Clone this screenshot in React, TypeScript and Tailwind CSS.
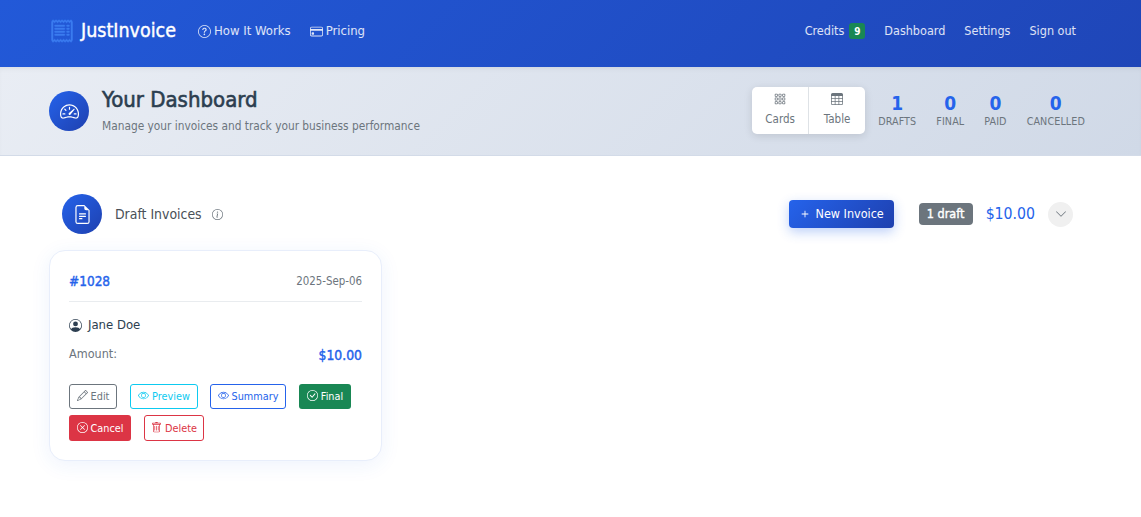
import {
  BsCheckCircle,
  BsChevronDown,
  BsCreditCard,
  BsEye,
  BsFileEarmarkText,
  BsGrid3X3Gap,
  BsInfoCircle,
  BsPencil,
  BsPersonCircle,
  BsPlus,
  BsQuestionCircle,
  BsReceipt,
  BsSpeedometer2,
  BsTable,
  BsTrash,
  BsXCircle,
} from "react-icons/bs";

const stats = [
  { n: 1, label: "DRAFTS" },
  { n: 0, label: "FINAL" },
  { n: 0, label: "PAID" },
  { n: 0, label: "CANCELLED" },
];

const Navbar = () => (
  <nav className="flex h-[67px] items-center justify-between bg-[linear-gradient(135deg,#2259d8,#1f46b8)] pb-[5px] pl-[50px] pr-[65px] text-[13px] text-white/85">
    <div className="flex items-center">
      <BsReceipt className="h-6 w-6 text-[#3b7cf0]" stroke="currentColor" strokeWidth={0.3} />
      <span className="ml-[7px] text-[19.5px] text-white [-webkit-text-stroke:0.4px_white]">JustInvoice</span>
      <span className="ml-[22px] flex items-center gap-[3px]">
        <BsQuestionCircle className="h-[13px] w-[13px]" /> How It Works
      </span>
      <span className="ml-[19px] flex items-center gap-[3px]">
        <BsCreditCard className="h-[13px] w-[13px]" /> Pricing
      </span>
    </div>
    <div className="flex items-center gap-[19px] text-[12.5px]">
      <span className="flex items-center gap-[5px]">
        Credits
        <span className="flex h-4 w-4 items-center justify-center rounded-[3px] bg-[#198754] text-[10px] font-bold text-white">
          9
        </span>
      </span>
      <span>Dashboard</span>
      <span>Settings</span>
      <span>Sign out</span>
    </div>
  </nav>
);

const DashboardHeader = () => (
  <header className="flex h-[89px] items-center justify-between border-b border-[#d3dbe8] bg-[linear-gradient(135deg,#e9edf4,#d0d9e7)] pl-[49px] pr-[56px] shadow-[inset_0_4px_6px_-4px_rgba(0,0,0,0.1)]">
    <div className="flex items-center">
      <div className="flex h-10 w-10 items-center justify-center rounded-full bg-[linear-gradient(135deg,#2563eb,#1e40af)] text-white">
        <BsSpeedometer2 className="h-[19px] w-[19px]" />
      </div>
      <div className="ml-[13px] pb-1">
        <h1 className="text-[22px] leading-[29px] text-[#2c3e50] [-webkit-text-stroke:0.6px_#2c3e50]">Your Dashboard</h1>
        <p className="mt-[4px] text-[11.8px] leading-4 text-[#6c757d]">
          Manage your invoices and track your business performance
        </p>
      </div>
    </div>
    <div className="flex items-center">
      <div className="mb-[2px] flex h-[47px] w-[113px] rounded-[5px] bg-white text-[11.5px] text-[#6c757d] shadow-[0_2px_8px_rgba(0,0,0,0.12)]">
        <div className="flex w-[57px] flex-col items-center justify-center gap-[6px] border-r border-[#dee2e6] pt-[2px]">
          <BsGrid3X3Gap className="h-3 w-3" />
          Cards
        </div>
        <div className="flex flex-1 flex-col items-center justify-center gap-[6px] pt-[2px]">
          <BsTable className="h-3 w-3" />
          Table
        </div>
      </div>
      <div className="ml-[13px] flex gap-[20px] pb-[3px]">
        {stats.map((s) => (
          <div key={s.label} className="flex flex-col items-center">
            <span className="text-[19px] leading-[24px] font-bold text-[#2563eb]">{s.n}</span>
            <span className="text-[10.7px] leading-[14px] tracking-[0.1px] text-[#6c757d]">{s.label}</span>
          </div>
        ))}
      </div>
    </div>
  </header>
);

const btn = "flex items-center justify-center gap-[3px] rounded-[3px] pt-[2px]";
const btnIcon = "h-[11px] w-[11px] -translate-y-[2px]";

const InvoiceCard = () => (
  <div className="w-[333px] rounded-2xl border border-[#e8eefb] bg-white px-[19px] pt-[20px] pb-[19px] shadow-[0_4px_20px_rgba(37,99,235,0.08)]">
    <div className="flex items-center justify-between border-b border-[#e9ecef] pb-[9px]">
      <span className="text-[13.5px] leading-[21px] text-[#2563eb] [-webkit-text-stroke:0.4px_#2563eb]">#1028</span>
      <span className="text-[11.4px] text-[#6c757d]">2025-Sep-06</span>
    </div>
    <div className="mt-[14px] flex items-center gap-[6px] text-[13px] leading-[18px] text-[#2c3e50]">
      <BsPersonCircle className="h-[13px] w-[13px]" /> Jane Doe
    </div>
    <div className="mt-[11px] flex justify-between">
      <span className="text-[12.5px] leading-[18px] text-[#6c757d]">Amount:</span>
      <span className="mb-[1px] text-[13.8px] leading-[21px] text-[#2563eb] [-webkit-text-stroke:0.4px_#2563eb]">$10.00</span>
    </div>
    <div className="mt-[17px] flex flex-wrap gap-x-[13px] gap-y-[6px] text-[10.8px]">
      <span className={`${btn} h-[25px] w-[48px] border border-[#6c757d] text-[#6c757d]`}>
        <BsPencil className={btnIcon} /> Edit
      </span>
      <span className={`${btn} h-[25px] w-[68px] border border-[#0dcaf0] text-[#0dcaf0]`}>
        <BsEye className={btnIcon} /> Preview
      </span>
      <span className={`${btn} -ml-px h-[25px] w-[76px] border border-[#2563eb] text-[#2563eb]`}>
        <BsEye className={btnIcon} /> Summary
      </span>
      <span className={`${btn} h-[25px] w-[52px] bg-[#198754] text-white`}>
        <BsCheckCircle className={btnIcon} /> Final
      </span>
      <span className={`${btn} h-[26px] w-[62px] bg-[#dc3545] text-white`}>
        <BsXCircle className={btnIcon} /> Cancel
      </span>
      <span className={`${btn} h-[26px] w-[60px] border border-[#dc3545] text-[#dc3545]`}>
        <BsTrash className={btnIcon} /> Delete
      </span>
    </div>
  </div>
);

const DraftSection = () => (
  <section className="pl-[49px] pr-[68px] pt-[38px]">
    <div className="flex items-center justify-between pl-[13px]">
      <div className="flex items-center">
        <div className="flex h-10 w-10 items-center justify-center rounded-full bg-[linear-gradient(135deg,#2563eb,#1e40af)] text-white">
          <BsFileEarmarkText className="h-[19px] w-[19px]" />
        </div>
        <span className="ml-[13px] text-[13.9px] text-[#495057]">Draft Invoices</span>
        <BsInfoCircle className="ml-[10px] h-[11px] w-[11px] text-[#6c757d]" />
      </div>
      <div className="flex items-center">
        <button className="flex h-7 w-[105px] items-center justify-center rounded-[4px] bg-[linear-gradient(135deg,#2563eb,#1e40af)] text-[12.5px] text-white shadow-[0_4px_12px_rgba(37,99,235,0.3)]">
          <BsPlus className="mr-[3px] h-[14px] w-[14px]" /> New Invoice
        </button>
        <span className="ml-[25px] flex h-[22px] w-[54px] items-center justify-center rounded-[4px] bg-[#6c757d] text-[12.5px] text-white [-webkit-text-stroke:0.4px_white]">
          1 draft
        </span>
        <span className="ml-[13px] text-[15.7px] text-[#2563eb]">$10.00</span>
        <span className="ml-[13px] flex h-[25px] w-[25px] items-center justify-center rounded-full bg-[#f0f0f0] text-[#6c757d]">
          <BsChevronDown className="h-3 w-3" />
        </span>
      </div>
    </div>
    <div className="mt-4">
      <InvoiceCard />
    </div>
  </section>
);

export default function App() {
  return (
    <div className="min-h-[517px] bg-white font-['DejaVu_Sans_Condensed','DejaVu_Sans',sans-serif]">
      <Navbar />
      <DashboardHeader />
      <DraftSection />
    </div>
  );
}
